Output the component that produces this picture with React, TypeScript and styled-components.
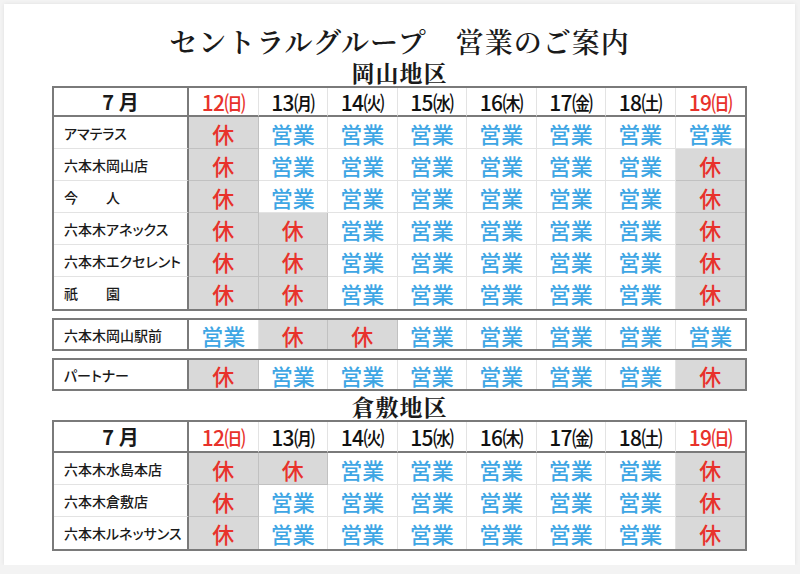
import React from 'react'
import styled, { createGlobalStyle } from 'styled-components'

const GlobalStyle = createGlobalStyle`
  html, body {
    margin: 0;
    padding: 0;
    background: #f3f3f3;
  }
  body {
    font-family: "Noto Sans CJK JP", "Noto Sans", sans-serif;
    color: #1a1a1a;
  }
`

const DARK = '#7a7a7a'
const LIGHT = 'rgba(0, 0, 0, 0.11)'
const RED = '#e8322b'
const BLUE = '#3ea6e4'

const Card = styled.div`
  margin: 4px 0 0 4px;
  width: 791px;
  height: 561px;
  box-sizing: border-box;
  background: #fff;
  box-shadow: 0 0 4px rgba(0, 0, 0, 0.08);
  padding-top: 20px;
  display: flex;
  flex-direction: column;
  align-items: center;
`

const Title = styled.h1`
  margin: 0;
  height: 34px;
  font-family: "Noto Serif CJK JP", "Noto Sans CJK JP", serif;
  font-size: 28px;
  font-weight: 600;
  line-height: 34px;
  letter-spacing: 1px;
  white-space: pre;
`

const AreaTitle = styled.h2<{ $top: number }>`
  margin: ${({ $top }) => $top}px 0 0;
  height: 26px;
  font-family: "Noto Serif CJK JP", "Noto Sans CJK JP", serif;
  font-size: 23px;
  font-weight: 700;
  line-height: 26px;
  letter-spacing: 1px;
`

const Grid = styled.div<{ $header: number; $gap: number; $row: number }>`
  margin-top: ${({ $gap }) => $gap}px;
  width: 695px;
  box-sizing: border-box;
  border: 2px solid ${DARK};
  display: grid;
  grid-template-columns: 135px repeat(8, 1fr);
  grid-template-rows: ${({ $header }) => ($header ? `${$header}px` : 'none')};
  grid-auto-rows: ${({ $row }) => $row}px;
`

const Cell = styled.div`
  box-sizing: border-box;
  display: flex;
  align-items: center;
  justify-content: center;
`

const MonthCell = styled(Cell)`
  border-right: 2px solid ${DARK};
  border-bottom: 2px solid ${DARK};
  font-size: 20px;
  font-weight: 700;
`

const DateCell = styled(Cell)<{ $sunday: boolean; $lastCol: boolean }>`
  border-bottom: 2px solid ${DARK};
  border-right: ${({ $lastCol }) => ($lastCol ? 'none' : `1px solid ${LIGHT}`)};
  color: ${({ $sunday }) => ($sunday ? RED : '#111')};
  font-size: 21px;
  font-weight: 500;
  letter-spacing: -0.6px;
`

const NameCell = styled(Cell)<{ $lastRow: boolean }>`
  justify-content: flex-start;
  padding-left: 10px;
  border-right: 2px solid ${DARK};
  border-bottom: ${({ $lastRow }) => ($lastRow ? 'none' : `1px solid ${LIGHT}`)};
  font-size: 14px;
  font-weight: 500;
  font-feature-settings: "palt";
  white-space: pre;
`

const StatusCell = styled(Cell)<{ $closed: boolean; $lastRow: boolean; $lastCol: boolean }>`
  background: ${({ $closed }) => ($closed ? '#d9d9d9' : '#fff')};
  color: ${({ $closed }) => ($closed ? RED : BLUE)};
  border-right: ${({ $lastCol }) => ($lastCol ? 'none' : `1px solid ${LIGHT}`)};
  border-bottom: ${({ $lastRow }) => ($lastRow ? 'none' : `1px solid ${LIGHT}`)};
  font-size: 22px;
  font-weight: 500;
`

const days = [
  { d: 12, w: '㈰', sun: true },
  { d: 13, w: '㈪', sun: false },
  { d: 14, w: '㈫', sun: false },
  { d: 15, w: '㈬', sun: false },
  { d: 16, w: '㈭', sun: false },
  { d: 17, w: '㈮', sun: false },
  { d: 18, w: '㈯', sun: false },
  { d: 19, w: '㈰', sun: true },
]

type Shop = { name: string; plan: string }

const okayama: Shop[] = [
  { name: 'アマテラス', plan: 'xooooooo' },
  { name: '六本木岡山店', plan: 'xoooooox' },
  { name: '今　　人', plan: 'xoooooox' },
  { name: '六本木アネックス', plan: 'xxooooox' },
  { name: '六本木エクセレント', plan: 'xxooooox' },
  { name: '祇　　園', plan: 'xxooooox' },
]

const singles: Shop[] = [
  { name: '六本木岡山駅前', plan: 'oxxooooo' },
  { name: 'パートナー', plan: 'xoooooox' },
]

const kurashiki: Shop[] = [
  { name: '六本木水島本店', plan: 'xxooooox' },
  { name: '六本木倉敷店', plan: 'xoooooox' },
  { name: '六本木ルネッサンス', plan: 'xoooooox' },
]

function Rows({ shops }: { shops: Shop[] }) {
  return (
    <>
      {shops.map((shop, r) => {
        const lastRow = r === shops.length - 1
        return (
          <React.Fragment key={shop.name}>
            <NameCell $lastRow={lastRow}>{shop.name}</NameCell>
            {shop.plan.split('').map((c, i) => (
              <StatusCell key={i} $closed={c === 'x'} $lastRow={lastRow} $lastCol={i === 7}>
                {c === 'x' ? '休' : '営業'}
              </StatusCell>
            ))}
          </React.Fragment>
        )
      })}
    </>
  )
}

function Schedule({ shops, header }: { shops: Shop[]; header: number }) {
  return (
    <Grid $header={header} $gap={0} $row={32}>
      <MonthCell>7 月</MonthCell>
      {days.map((day, i) => (
        <DateCell key={i} $sunday={day.sun} $lastCol={i === 7}>
          {day.d}
          {day.w}
        </DateCell>
      ))}
      <Rows shops={shops} />
    </Grid>
  )
}

function SingleRow({ shop }: { shop: Shop }) {
  return (
    <Grid $header={0} $gap={7} $row={29}>
      <Rows shops={[shop]} />
    </Grid>
  )
}

export default function App() {
  return (
    <>
      <GlobalStyle />
      <Card>
        <Title>{'セントラルグループ　営業のご案内'}</Title>
        <AreaTitle $top={2}>岡山地区</AreaTitle>
        <Schedule shops={okayama} header={29} />
        <SingleRow shop={singles[0]} />
        <SingleRow shop={singles[1]} />
        <AreaTitle $top={3}>倉敷地区</AreaTitle>
        <Schedule shops={kurashiki} header={31} />
      </Card>
    </>
  )
}
